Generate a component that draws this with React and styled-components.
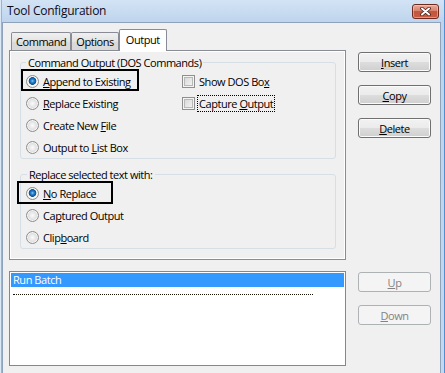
import React from 'react';
import styled, { createGlobalStyle, css } from 'styled-components';

const FONT = `"Segoe UI", "Open Sans", "Noto Sans", sans-serif`;

const GlobalStyle = createGlobalStyle`
  html, body { margin: 0; padding: 0; background: #ffffff; }
  body { font-family: ${FONT}; font-size: 11px; letter-spacing: -0.45px; color: #000; }
  * { box-sizing: border-box; }
`;

const Window = styled.div`
  width: 445px;
  height: 373px;
  display: flex;
  flex-direction: column;
  padding: 0 3px 0 2px;
  border-right: 1px solid #4f8fd0;
  background:
    linear-gradient(to right, #dbe8f5 0 1px, #8fb6de 1px 2px, transparent 2px),
    linear-gradient(#d3e3f5 0, #bed4ed 22px, #c4d8ef 100%);
  overflow: hidden;
`;

const TitleBar = styled.div`
  height: 22px;
  flex: none;
  display: flex;
  align-items: flex-start;
  justify-content: space-between;
`;

const Title = styled.div`
  padding: 3px 0 0 5px;
  line-height: 16px;
  font-size: 12px;
  letter-spacing: -0.25px;
  color: #0b0b1a;
`;

const CloseButton = styled.div`
  width: 27px;
  height: 15px;
  margin: 4px 2px 0 0;
  border: 1px solid #6e2a1f;
  border-radius: 3px;
  background: linear-gradient(#eaaa9b 0%, #d8826f 45%, #c4553e 50%, #c95c42 100%);
  box-shadow: inset 0 0 0 1px rgba(255, 220, 210, 0.45);
  display: flex;
  align-items: center;
  justify-content: center;
`;

const Client = styled.div`
  flex: 1;
  background: #f0f0f0;
  border: 1px solid #8ea3bb;
  border-bottom: none;
  display: grid;
  grid-template-columns: 337px 73px;
  grid-template-rows: 231px 95px;
  column-gap: 12px;
  row-gap: 11px;
  padding: 6px 0 0 6px;
  align-content: start;
`;

const TabControl = styled.div`
  display: flex;
  flex-direction: column;
`;

const TabStrip = styled.div`
  height: 21px;
  display: flex;
  align-items: flex-end;
  padding-left: 2px;
  position: relative;
  z-index: 1;
`;

const Tab = styled.div`
  border: 1px solid #898c95;
  border-bottom: none;
  border-radius: 2px 2px 0 0;
  color: #000;
  ${(p) =>
    p.$active
      ? css`
          height: 22px;
          margin-bottom: -1px;
          line-height: 20px;
          background: #ffffff;
          padding: 0 6px 0 6px;
        `
      : css`
          height: 18px;
          padding: 0 4px 0 4px;
          line-height: 18px;
          background: linear-gradient(#f0f0f0, #e3e3e3 50%, #dadada 51%, #d9d9d9);
        `}
`;

const Panel = styled.div`
  height: 210px;
  border: 1px solid #898c95;
  background: #f0f0f0;
  box-shadow: inset 0 0 0 1px #ffffff;
  padding: 4px 9px 0 10px;
`;

const Group = styled.fieldset`
  margin: ${(p) => p.$mt || 0}px 0 0 0;
  padding: 0;
  border: 1px solid #d5dfe5;
  border-radius: 3px;
  min-width: 0;
`;

const Legend = styled.legend`
  margin-left: ${(p) => p.$indent}px;
  padding: 0 2px;
  line-height: 15px;
  color: #000;
`;

const OptionGrid = styled.div`
  display: grid;
  grid-template-columns: 156px auto;
  grid-auto-rows: 22px;
  align-items: center;
`;

const Row = styled.div`
  position: relative;
  justify-self: start;
  height: 22px;
  display: flex;
  align-items: center;
  padding-left: 5px;
  grid-column: ${(p) => p.$col || 1};
  grid-row: ${(p) => p.$row};
  ${(p) =>
    p.$hl &&
    css`
      &::after {
        content: '';
        position: absolute;
        top: ${p.$hl.t}px;
        bottom: ${p.$hl.b}px;
        left: ${p.$hl.l}px;
        right: ${p.$hl.r}px;
        border: 2px solid #000;
      }
    `}
`;

const Radio = styled.span`
  width: 13px;
  height: 13px;
  flex: none;
  margin-right: 4px;
  border-radius: 50%;
  border: 1px solid #8d8d8d;
  background: ${(p) =>
    p.$checked
      ? 'radial-gradient(circle at 50% 45%, #8ccaf2 0, #2a86d1 1.5px, #0f5ea8 3px, #164f82 3.6px, #ffffff 4.2px, #f4f4f4 5px, #d8d8d8 6px)'
      : 'radial-gradient(circle at 50% 50%, #fafafa 0, #ececec 2.5px, #dcdcdc 4.5px, #cfcfcf 5.6px, #f4f4f4 6px)'};
  box-shadow: inset 0 0 0 1px #f6f6f6;
`;

const Check = styled.span`
  width: 13px;
  height: 13px;
  flex: none;
  border: 1px solid #8e8f8f;
  background: linear-gradient(135deg, #d3d3d3, #f8f8f8);
  box-shadow: inset 0 0 0 1px #f4f4f4, inset 0 0 0 2px #b8b8b8;
  margin-right: 2px;
`;

const Label = styled.span`
  line-height: 15px;
  white-space: nowrap;
`;

const CheckLabel = styled.span`
  line-height: 15px;
  padding: 0 1px;
  border: 1px dotted ${(p) => (p.$focus ? '#000' : 'transparent')};
  white-space: nowrap;
`;

const ButtonColumn = styled.div`
  display: flex;
  flex-direction: column;
  gap: 13px;
  padding-top: ${(p) => p.$pt}px;
`;

const Button = styled.div`
  width: 73px;
  height: 20px;
  border-radius: 3px;
  display: flex;
  align-items: center;
  justify-content: center;
  line-height: 15px;
  ${(p) =>
    p.$disabled
      ? css`
          border: 1px solid #adb2b5;
          background: #f4f4f4;
          color: #838383;
        `
      : css`
          border: 1px solid #707070;
          background: linear-gradient(#f2f2f2 0%, #ebebeb 50%, #dddddd 51%, #cfcfcf 100%);
          box-shadow: inset 0 0 0 1px #fbfbfb;
          color: #000;
        `}
`;

const ListBox = styled.div`
  height: 95px;
  border: 1px solid #828790;
  background: #ffffff;
  padding: 1px;
`;

const ListItem = styled.div`
  height: 14px;
  line-height: 14px;
  padding-left: 2px;
  color: ${(p) => (p.$selected ? '#ffffff' : '#000')};
  background: ${(p) => (p.$selected ? '#3399ff' : 'transparent')};
`;

const SeparatorItem = styled.div`
  height: 14px;
  display: flex;
  align-items: center;
  padding-left: 2px;
  &::before {
    content: '';
    width: 300px;
    border-top: 1px dotted #1a1208;
  }
`;

const CloseIcon = () => (
  <svg width="11" height="9" viewBox="0 0 11 9">
    <path d="M2 1.5 L9 7.5 M9 1.5 L2 7.5" stroke="#4a1f17" strokeWidth="3.6" strokeLinecap="round" />
    <path d="M2 1.5 L9 7.5 M9 1.5 L2 7.5" stroke="#ffffff" strokeWidth="2" strokeLinecap="round" />
  </svg>
);

const K = ({ children }) => <u>{children}</u>;

export default function App() {
  return (
    <>
      <GlobalStyle />
      <Window>
        <TitleBar>
          <Title>Tool Configuration</Title>
          <CloseButton>
            <CloseIcon />
          </CloseButton>
        </TitleBar>
        <Client>
          <TabControl>
            <TabStrip>
              <Tab>Command</Tab>
              <Tab>Options</Tab>
              <Tab $active>Output</Tab>
            </TabStrip>
            <Panel>
              <Group>
                <Legend $indent={5}>Command Output (DOS Commands)</Legend>
                <OptionGrid>
                  <Row $row={1} $hl={{ t: -1, b: 1, l: 0, r: -8 }}>
                    <Radio $checked />
                    <Label><K>A</K>ppend to Existing</Label>
                  </Row>
                  <Row $row={2}>
                    <Radio />
                    <Label><K>R</K>eplace Existing</Label>
                  </Row>
                  <Row $row={3}>
                    <Radio />
                    <Label>Create New <K>F</K>ile</Label>
                  </Row>
                  <Row $row={4}>
                    <Radio />
                    <Label>Output to <K>L</K>ist Box</Label>
                  </Row>
                  <Row $row={1} $col={2}>
                    <Check />
                    <CheckLabel>Show DOS Bo<K>x</K></CheckLabel>
                  </Row>
                  <Row $row={2} $col={2}>
                    <Check />
                    <CheckLabel $focus>Capture <K>O</K>utput</CheckLabel>
                  </Row>
                </OptionGrid>
              </Group>
              <Group $mt={8}>
                <Legend $indent={6}>Replace selected text with:</Legend>
                <OptionGrid>
                  <Row $row={1} $hl={{ t: -1, b: 0, l: -4, r: -17 }}>
                    <Radio $checked />
                    <Label><K>N</K>o Replace</Label>
                  </Row>
                  <Row $row={2}>
                    <Radio />
                    <Label>Ca<K>p</K>tured Output</Label>
                  </Row>
                  <Row $row={3}>
                    <Radio />
                    <Label>Clip<K>b</K>oard</Label>
                  </Row>
                </OptionGrid>
              </Group>
            </Panel>
          </TabControl>
          <ButtonColumn $pt={23}>
            <Button><span><K>I</K>nsert</span></Button>
            <Button><span><K>C</K>opy</span></Button>
            <Button><span><K>D</K>elete</span></Button>
          </ButtonColumn>
          <ListBox>
            <ListItem $selected>Run Batch</ListItem>
            <SeparatorItem />
          </ListBox>
          <ButtonColumn $pt={1}>
            <Button $disabled><span><K>U</K>p</span></Button>
            <Button $disabled><span><K>D</K>own</span></Button>
          </ButtonColumn>
        </Client>
      </Window>
    </>
  );
}
